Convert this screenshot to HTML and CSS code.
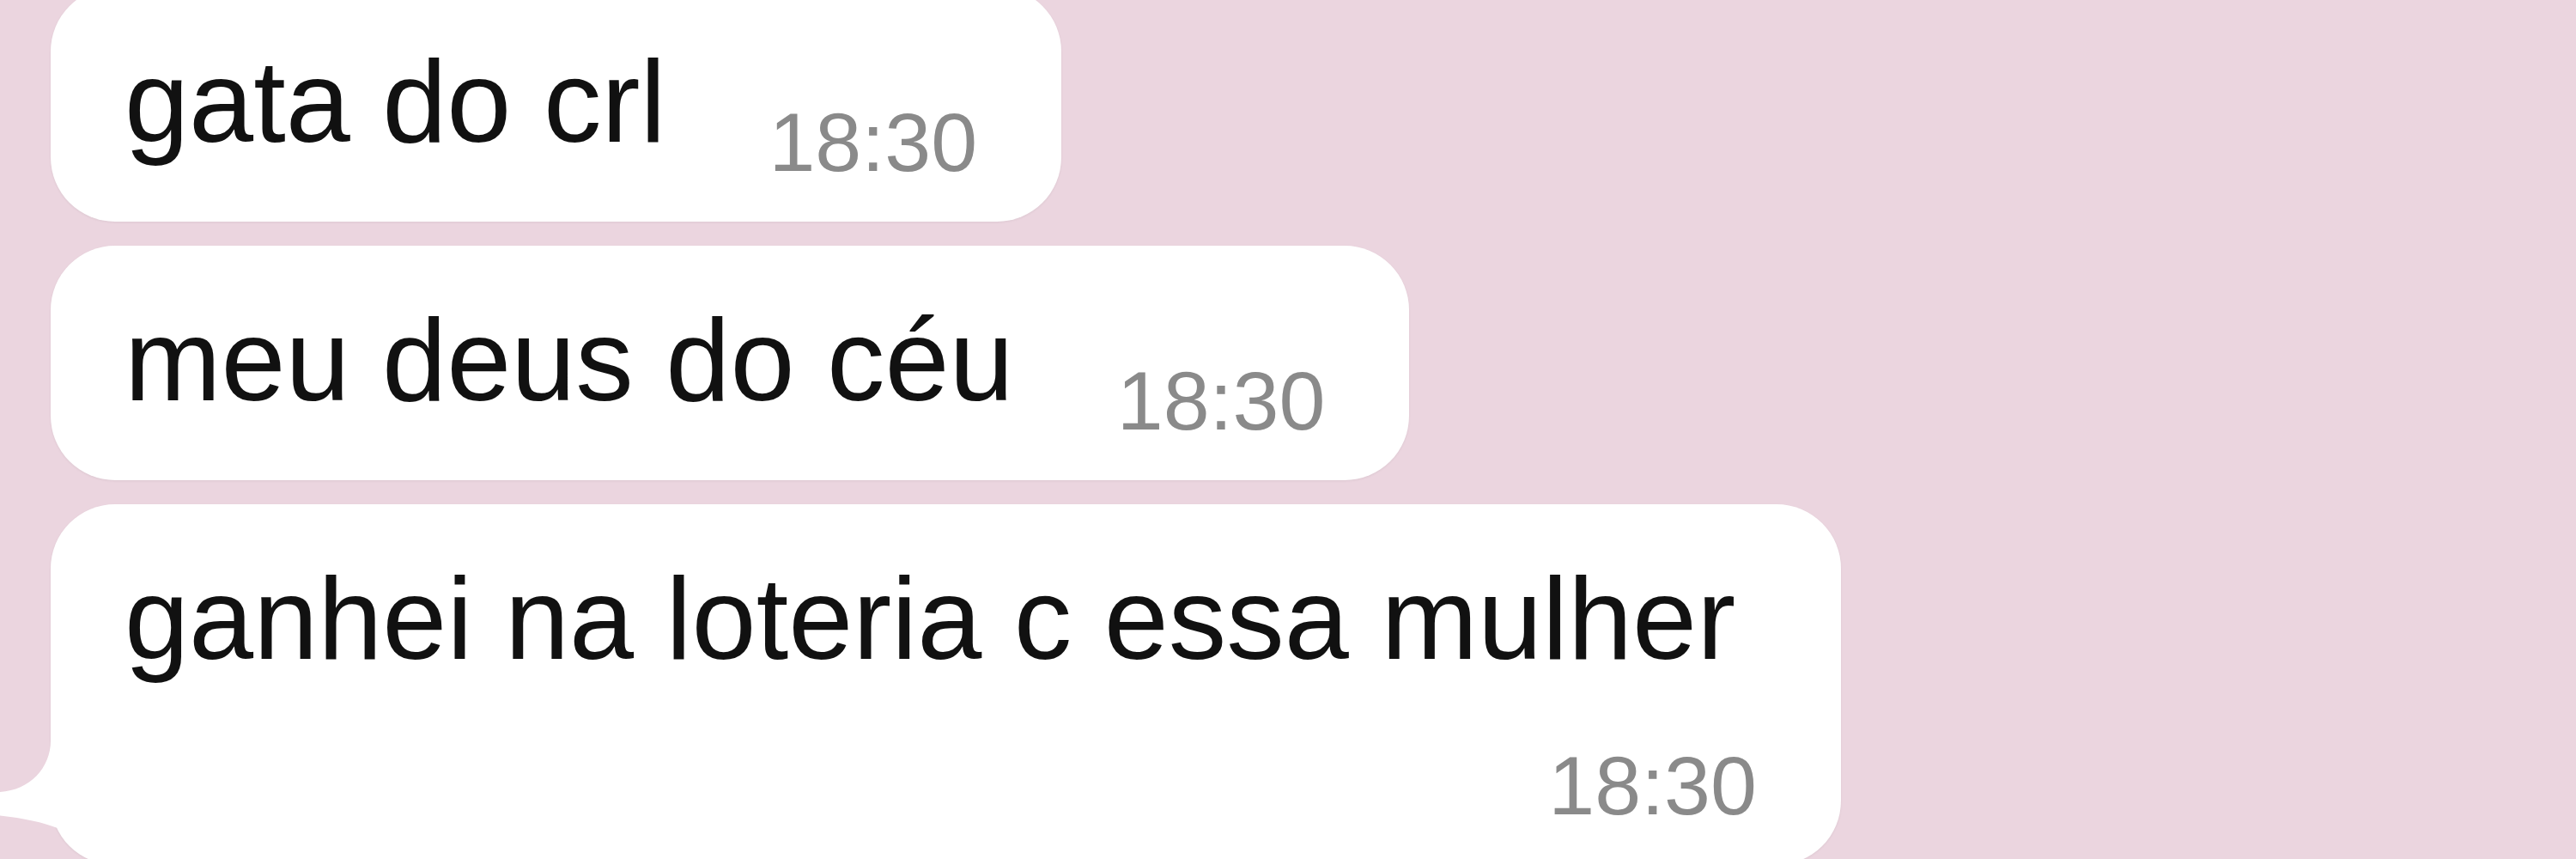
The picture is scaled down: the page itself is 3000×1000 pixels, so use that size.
FILE: index.html
```html
<!DOCTYPE html>
<html lang="pt">
<head>
    <meta charset="UTF-8">
    <meta name="viewport" content="width=device-width, initial-scale=1.0">
    <title>Conversa</title>
    <link rel="stylesheet" href="styles.css">
</head>
<body>
    <div class="chat">
        <div class="bubble">
            <span class="text">gata do crl</span>
            <span class="time">18:30</span>
        </div>
        <div class="bubble">
            <span class="text">meu deus do céu</span>
            <span class="time">18:30</span>
        </div>
        <div class="bubble last">
            <span class="text">ganhei na loteria c essa mulher</span>
            <span class="time">18:30</span>
            <svg class="tail" viewBox="0 0 170 165" width="170" height="165">
                <path d="M59 0 L59 20 C59 53 33 80 -4 80 L-4 107 C25 110 50 115 67 122 C85 134 100 150 125 165 L170 165 L170 0 Z" fill="#ffffff"/>
            </svg>
        </div>
    </div>
</body>
</html>
```

FILE: styles.css
```css
:root {
    --bg: #ebd5df;
    --bubble: #ffffff;
    --ink: #111111;
    --muted: #8a8a8a;
}
body {
    margin: 0;
    background-color: var(--bg);
    font-family: 'Liberation Sans', Arial, sans-serif;
    overflow: hidden;
}
.chat {
    display: flex;
    flex-direction: column;
    align-items: flex-start;
    gap: 28px;
    margin-top: -15px;
    padding-left: 59px;
}
.bubble {
    position: relative;
    display: flex;
    flex-wrap: wrap;
    align-items: flex-end;
    box-sizing: border-box;
    max-width: 2085px;
    padding: 56px 98px 39px 86px;
    background-color: var(--bubble);
    border-radius: 75px;
    box-shadow: 0 1px 3px rgba(0, 0, 0, 0.06);
}
.text {
    color: var(--ink);
    font-size: 135px;
    line-height: 155px;
    margin-bottom: 23px;
    white-space: nowrap;
}
.time {
    color: var(--muted);
    font-size: 97px;
    line-height: 106px;
    margin-left: 120px;
}
.last .time {
    margin-left: auto;
    margin-top: 41px;
}
.tail {
    position: absolute;
    left: -59px;
    bottom: 0;
}
```
